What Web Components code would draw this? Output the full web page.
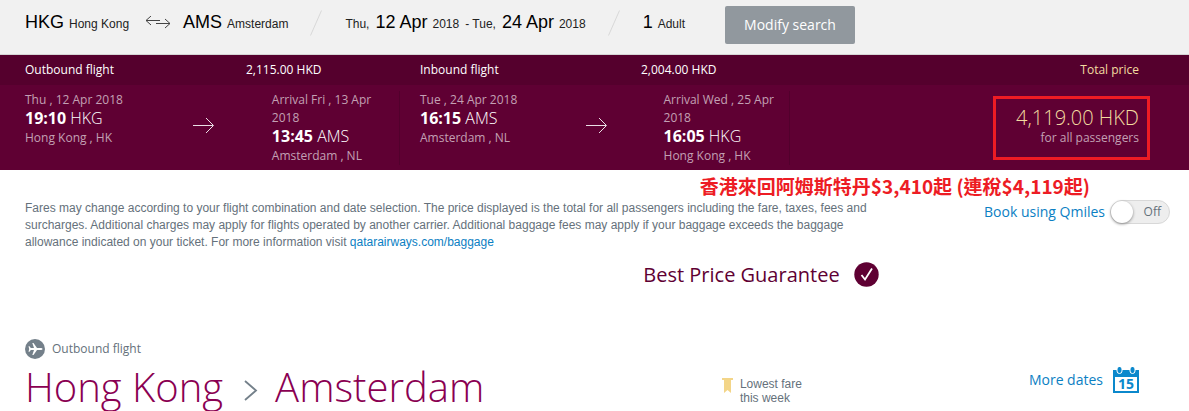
<!DOCTYPE html>
<html lang="en">
<head>
<meta charset="utf-8">
<title>Flight selection</title>
<style>
body { margin: 0; background: #fff; font-family: "Open Sans", sans-serif; font-size: 12px; line-height: 18px; color: #65717b; }
</style>
</head>
<body>
<flight-page></flight-page>
<script>
function define(name, html, setup) {
  const template = document.createElement('template');
  template.innerHTML = html;
  customElements.define(name, class extends HTMLElement {
    constructor() {
      super();
      this.attachShadow({ mode: 'open' }).append(template.content.cloneNode(true));
    }
    connectedCallback() { if (setup) setup(this, this.shadowRoot); }
  });
}

define('search-place', `
<style>
:host { display: flex; align-items: baseline; gap: 5px; color: #222; font: 12px/24px "Liberation Sans", Arial, sans-serif; white-space: nowrap; }
::slotted(b) { font-size: 18px; font-weight: 400; color: #000; }
</style>
<slot name="main"></slot><span><slot></slot></span>`);

define('slash-divider', `
<style>:host { display: block; height: 26px; } svg { display: block; }</style>
<svg width="12" height="26"><path d="M11.5 .5L.5 25.5" stroke="#d8d8d8" fill="none"/></svg>`);

define('search-bar', `
<style>
:host { display: flex; align-items: flex-start; background: #f1f1f1; border-bottom: 1px solid #d5d5d5; padding: 6px 25px; height: 42px; }
.line { display: flex; align-items: center; padding-top: 4px; height: 26px; }
.swap { margin: 0 12px 0 16px; }
slash-divider { margin: 0 23px 0 22px; }
.dates { display: flex; gap: 6px; align-items: baseline; }
button { margin-left: 40px; width: 130px; height: 38px; border: 0; border-radius: 2px; background: #91989e; color: #fff; font: 14px/20px "Open Sans", sans-serif; white-space: nowrap; }
</style>
<div class="line">
<search-place><b slot="main">HKG</b>Hong Kong</search-place>
<svg class="swap" width="26" height="14" fill="none" stroke="#444"><path d="M6 0L1 4.500L6 9M1 4.500H15M20 3L25 7.500L20 12M11 7.500H25"/></svg>
<search-place><b slot="main">AMS</b>Amsterdam</search-place>
<slash-divider></slash-divider>
<div class="dates">
<search-place>Thu,</search-place>
<search-place><b slot="main">12 Apr</b>2018</search-place>
<search-place>- Tue,</search-place>
<search-place><b slot="main">24 Apr</b>2018</search-place>
</div>
<slash-divider></slash-divider>
<search-place><b slot="main">1</b>Adult</search-place>
</div>
<button type="button">Modify search</button>`);

define('flight-stop', `
<style>
:host { display: block; color: #c3a0b4; }
.time { font-size: 16px; font-weight: 300; color: #fff; line-height: 18px; }
b { font-weight: 700; }
.city { padding-top: 2px; }
</style>
<div><slot name="date"></slot></div>
<div class="time"><b><slot name="time"></slot></b> <slot name="code"></slot></div>
<div class="city"><slot></slot></div>`);

define('flight-leg', `
<style>
:host { display: block; min-width: 0; }
header { display: grid; grid-template-columns: 221px 1fr; line-height: 30px; color: #fff; white-space: nowrap; }
.body { display: grid; grid-template-columns: 45% 21% 34%; margin-top: 6px; height: 74px; border-right: 1px solid #52002c; }
svg { margin-top: 26px; }
.to { padding-right: 8px; }
</style>
<header><span><slot name="title"></slot></span><span><slot name="price"></slot></span></header>
<div class="body">
<slot name="from"></slot>
<svg width="22" height="16" fill="none" stroke="#eadfe5"><path d="M0 8.500H20M13 1L20.500 8.500L13 16"/></svg>
<div class="to"><slot name="to"></slot></div>
</div>`);

define('trip-total', `
<style>
:host { display: flex; flex-direction: column; align-items: flex-end; color: #c3a0b4; white-space: nowrap; }
header { line-height: 30px; color: #f3dca0; }
.box { margin: 11px -11px 0 0; border: 3px solid #ed1c24; padding: 9px 8px 9px 20px; text-align: right; line-height: 20px; }
.sum { font-size: 20px; font-weight: 300; line-height: 20px; color: #f3dca0; }
</style>
<header>Total price</header>
<div class="box"><div class="sum"><slot></slot></div>for all passengers</div>`);

define('trip-summary', `
<style>
:host { display: grid; grid-template-columns: 375fr 370fr 329fr; column-gap: 20px; padding: 0 50px 5px 25px; background: linear-gradient(#55002d 30px, #5f0033 30px); }
</style>
<flight-leg>
<span slot="title">Outbound flight</span><span slot="price">2,115.00 HKD</span>
<flight-stop slot="from"><span slot="date">Thu , 12 Apr 2018</span><span slot="time">19:10</span><span slot="code">HKG</span>Hong Kong , HK</flight-stop>
<flight-stop slot="to"><span slot="date">Arrival Fri , 13 Apr 2018</span><span slot="time">13:45</span><span slot="code">AMS</span>Amsterdam , NL</flight-stop>
</flight-leg>
<flight-leg>
<span slot="title">Inbound flight</span><span slot="price">2,004.00 HKD</span>
<flight-stop slot="from"><span slot="date">Tue , 24 Apr 2018</span><span slot="time">16:15</span><span slot="code">AMS</span>Amsterdam , NL</flight-stop>
<flight-stop slot="to"><span slot="date">Arrival Wed , 25 Apr 2018</span><span slot="time">16:05</span><span slot="code">HKG</span>Hong Kong , HK</flight-stop>
</flight-leg>
<trip-total>4,119.00 HKD</trip-total>`);

define('qmiles-switch', `
<style>
:host { display: flex; align-items: center; gap: 5px; color: #0b80c3; font-size: 14px; line-height: 24px; white-space: nowrap; }
.track { display: grid; }
input, .state { grid-area: 1 / 1; }
input { appearance: none; margin: 0; width: 60px; height: 24px; box-sizing: border-box; border: 1px solid #d8d8d8; border-radius: 12px; background: #eee; }
input::before { content: ""; display: block; width: 22px; height: 22px; border-radius: 11px; background: #fff; box-shadow: 0 1px 3px #888; }
input:checked::before { margin-left: auto; }
.state { justify-self: end; padding: 0 9px; font-size: 12px; color: #65717b; pointer-events: none; }
</style>
<label for="q">Book using Qmiles</label>
<span class="track"><input id="q" type="checkbox" role="switch"><span class="state">Off</span></span>`,
(host, root) => {
  const input = root.querySelector('input');
  const state = root.querySelector('.state');
  input.addEventListener('change', () => {
    state.textContent = input.checked ? 'On' : 'Off';
    state.style.justifySelf = input.checked ? 'start' : 'end';
  });
});

define('fare-notes', `
<style>
:host { display: block; padding: 0 19px 0 25px; }
.promo { text-align: right; padding: 3px 80px 1px 0; font: 700 19px/26px "Noto Sans CJK TC", sans-serif; color: #ed1c24; }
.row { display: flex; justify-content: space-between; align-items: flex-start; gap: 40px; }
p { margin: 0; max-width: 860px; font: 12px/17px "Liberation Sans", Arial, sans-serif; }
a { color: #0b80c3; text-decoration: none; }
.best { display: flex; align-items: center; gap: 14px; margin: 11px 0 0 54%; font-size: 20px; line-height: 26px; color: #5f0033; font-weight: 500; white-space: nowrap; }
.best svg { margin-top: -2px; }
</style>
<div class="promo" lang="zh-Hant">香港來回阿姆斯特丹$3,410起 (連稅$4,119起)</div>
<div class="row">
<p>Fares may change according to your flight combination and date selection. The price displayed is the total for all passengers including the fare, taxes, fees and surcharges. Additional charges may apply for flights operated by another carrier. Additional baggage fees may apply if your baggage exceeds the baggage allowance indicated on your ticket. For more information visit <a href="#baggage">qatarairways.com/baggage</a></p>
<qmiles-switch></qmiles-switch>
</div>
<div class="best">Best Price Guarantee
<svg width="25" height="25" viewBox="0 0 25 25"><circle cx="12.500" cy="12.500" r="12.200" fill="#5f0033"/><path d="M7.500 13L11 17.500L18 6.500" fill="none" stroke="#fff" stroke-width="1.800"/></svg>
</div>`);

define('route-heading', `
<style>
:host { display: grid; grid-template-columns: 697fr 307fr auto; padding: 51px 50px 0 25px; }
.kind { display: flex; align-items: center; gap: 7px; line-height: 20px; }
h1 { display: flex; align-items: center; margin: 4px 0 0; font-size: 40px; line-height: 48px; font-weight: 300; color: #8a0052; white-space: nowrap; }
h1 svg { margin: 6px 17px 0 21px; }
.lowest { display: flex; gap: 7px; padding-top: 38px; font: 12px/14px "Liberation Sans", Arial, sans-serif; }
.lowest svg { margin-top: 1px; }
.more { display: flex; gap: 10px; align-self: start; margin-top: 28px; color: #0b80c3; font-size: 14px; line-height: 26px; text-decoration: none; white-space: nowrap; }
</style>
<div>
<div class="kind"><svg width="20" height="20" viewBox="0 0 20 20"><circle cx="10" cy="10" r="10" fill="#74808a"/><path fill="#fff" d="M17.500 10C17.500 9.300 16.500 9 15.500 9H12L8.500 4H7.300L9 9H5.800L4.500 7.300H3.500L4.200 10L3.500 12.700H4.500L5.800 11H9L7.300 16H8.500L12 11H15.500C16.500 11 17.500 10.700 17.500 10Z"/></svg>Outbound flight</div>
<h1>Hong Kong<svg width="14" height="21" fill="none" stroke="#74808a" stroke-width="1.800"><path d="M1 1L12 10.500L1 20"/></svg>Amsterdam</h1>
</div>
<div class="lowest"><svg width="11" height="16"><path fill="#f3d588" d="M0 0H11V2H9V15L5.500 12L2 15V2H0Z"/></svg><span>Lowest fare<br>this week</span></div>
<a class="more" href="#dates">More dates
<svg width="26" height="26" viewBox="0 0 26 26"><path fill="#0b88cc" fill-rule="evenodd" d="M0 3H26V26H0ZM2 10V24H24V10Z"/><g stroke="#fff" fill="#0b88cc"><rect x="4" y="-.5" width="5" height="7" rx="2.500"/><rect x="17" y="-.5" width="5" height="7" rx="2.500"/></g><text x="13" y="22" text-anchor="middle" fill="#0b88cc" font-family="Open Sans" font-size="14" font-weight="700">15</text></svg></a>`);

define('flight-page', `
<style>:host { display: block; }</style>
<search-bar></search-bar>
<trip-summary></trip-summary>
<fare-notes></fare-notes>
<route-heading></route-heading>`);
</script>
</body>
</html>
